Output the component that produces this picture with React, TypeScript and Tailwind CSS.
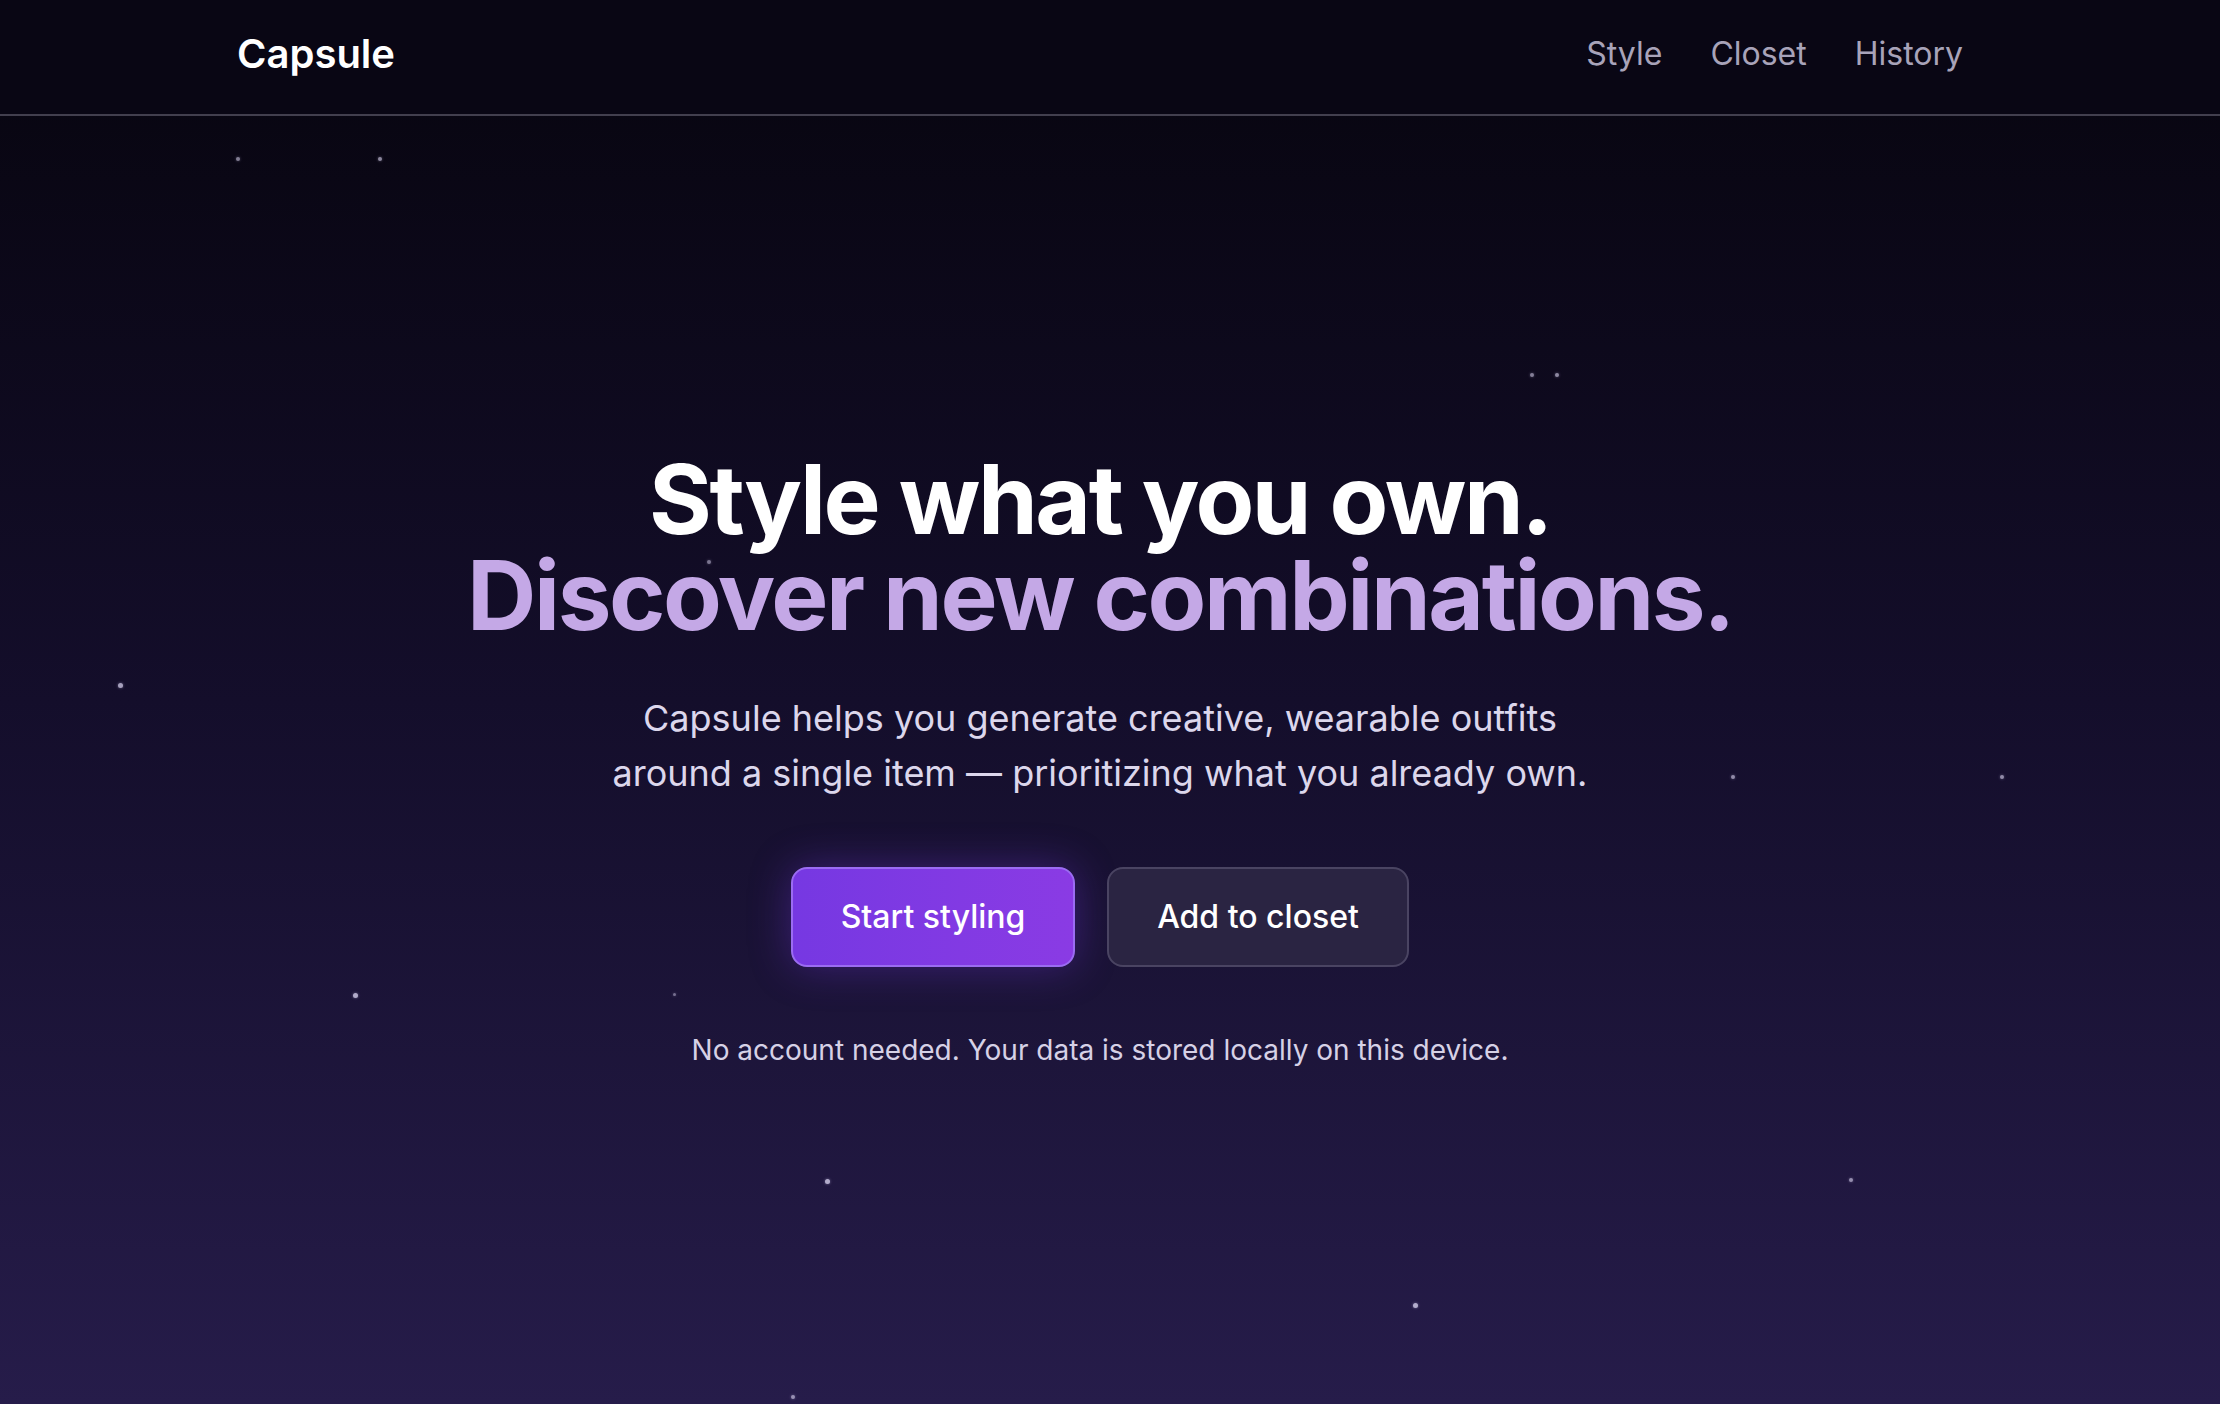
import React from "react";

const stars: { x: number; y: number; s: number; o: number }[] = [
  { x: 238, y: 159, s: 4, o: 0.55 },
  { x: 380, y: 159, s: 4, o: 0.6 },
  { x: 1532, y: 375, s: 4, o: 0.55 },
  { x: 1557, y: 375, s: 4, o: 0.6 },
  { x: 709, y: 562, s: 4, o: 0.5 },
  { x: 120, y: 685, s: 5, o: 0.7 },
  { x: 1733, y: 777, s: 4, o: 0.6 },
  { x: 2002, y: 777, s: 4, o: 0.6 },
  { x: 355, y: 995, s: 5, o: 0.75 },
  { x: 674, y: 994, s: 3, o: 0.45 },
  { x: 827, y: 1181, s: 5, o: 0.75 },
  { x: 1851, y: 1180, s: 4, o: 0.6 },
  { x: 1415, y: 1305, s: 5, o: 0.75 },
  { x: 793, y: 1397, s: 4, o: 0.6 },
];

export default function App() {
  return (
    <div
      className="relative min-h-screen w-full overflow-hidden bg-gradient-to-b from-[#07050e] via-[#140e2b] to-[#261c4a] pr-[20px] flex flex-col"
      style={{ fontFamily: "Inter, 'Noto Sans', sans-serif" }}
    >
      {/* stars */}
      <div className="pointer-events-none absolute inset-0">
        {stars.map((st, i) => (
          <span
            key={i}
            className="absolute rounded-full bg-[#e4defa]"
            style={{
              left: st.x - st.s / 2,
              top: st.y - st.s / 2,
              width: st.s,
              height: st.s,
              opacity: st.o,
              boxShadow: "0 0 3px rgba(220,210,255,0.6)",
            }}
          />
        ))}
      </div>

      {/* header */}
      <header className="relative -mr-[20px] pr-[20px] h-[116px] pb-[6px] border-b-2 border-[#423f4e] bg-[#0a0715]/90 flex items-center">
        <div className="mx-auto w-[1726px] flex items-center justify-between">
          <span className="text-[40px] font-semibold text-white leading-none">
            Capsule
          </span>
          <nav className="flex items-center gap-[48px] text-[32px] text-[#a8a3b9] leading-none">
            <a>Style</a>
            <a>Closet</a>
            <a>History</a>
          </nav>
        </div>
      </header>

      {/* hero */}
      <main className="relative flex-1 flex flex-col items-center justify-center text-center">
        <h1 className="text-[96px] font-bold leading-[96px] tracking-[-0.025em]">
          <span className="block text-white">Style what you own.</span>
          <span className="block text-[#c4a8e6]">Discover new combinations.</span>
        </h1>
        <p className="mt-[48px] text-[36px] leading-[55px] text-[#dcd7ec]">
          Capsule helps you generate creative, wearable outfits
          <br />
          around a single item — prioritizing what you already own.
        </p>
        <div className="mt-[66px] flex items-center gap-[32px]">
          <button className="h-[100px] w-[284px] rounded-[16px] border-2 border-[#9b6cf2] bg-gradient-to-r from-[#7638e2] to-[#8a3be4] text-[32px] font-medium text-white shadow-[0_0_40px_rgba(124,58,237,0.35)]">
            Start styling
          </button>
          <button className="h-[100px] w-[302px] rounded-[16px] border-2 border-[#4a4462] bg-[#2a2442] text-[32px] font-medium text-white">
            Add to closet
          </button>
        </div>
        <p className="mt-[64px] text-[28px] leading-[38px] text-[#d6d1e6]">
          No account needed. Your data is stored locally on this device.
        </p>
      </main>
    </div>
  );
}
